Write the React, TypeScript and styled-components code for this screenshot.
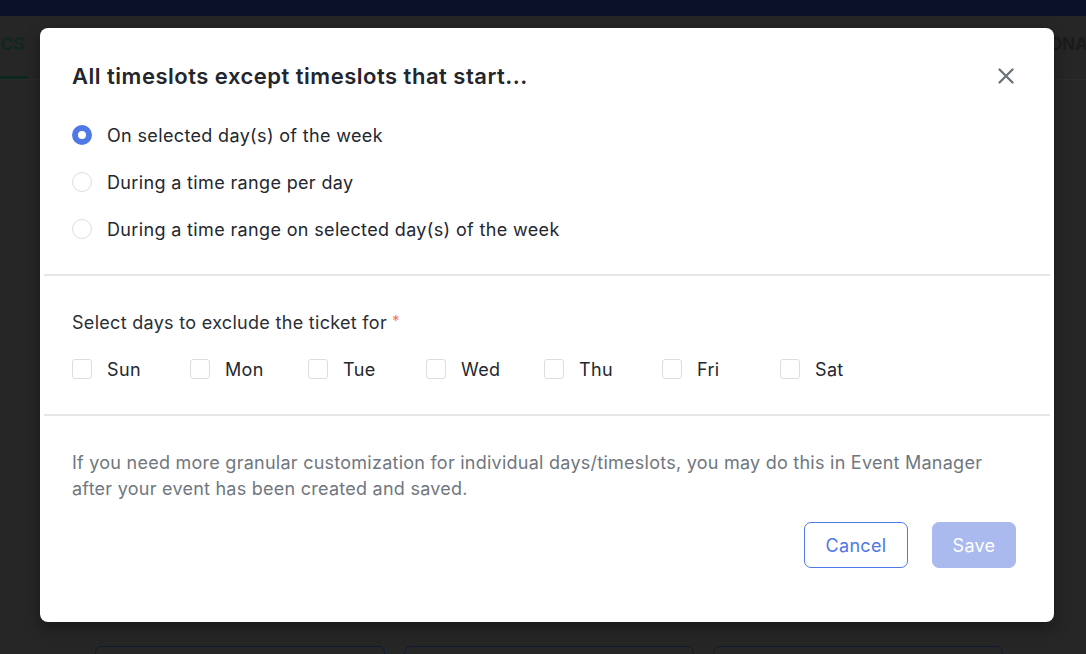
import React, { useState } from "react";
import styled, { createGlobalStyle } from "styled-components";

const GlobalStyle = createGlobalStyle`
  html, body {
    margin: 0;
    padding: 0;
    background: #262626;
    font-family: Inter, "Open Sans", Arial, sans-serif;
    overflow: hidden;
  }
`;

const Page = styled.div`
  width: 1086px;
  height: 654px;
  position: relative;
  overflow: hidden;
  background: #262626;
`;

const TopBar = styled.div`
  height: 16px;
  background: #0b1227;
`;

const Tabs = styled.div`
  height: 63px;
  display: flex;
  justify-content: space-between;
  align-items: center;
  border-bottom: 1px solid #2b2b2b;
`;

const Tab = styled.div<{ active?: boolean }>`
  height: 100%;
  display: flex;
  align-items: center;
  font-size: 17px;
  font-weight: 700;
  color: ${(p) => (p.active ? "#12261e" : "#1b1b1b")};
  border-bottom: 3px solid ${(p) => (p.active ? "#0e2620" : "transparent")};
  box-sizing: border-box;
  padding: 0 4px 4px;
  margin-left: ${(p) => (p.active ? "-8px" : "0")};
  margin-right: ${(p) => (p.active ? "0" : "-6px")};
`;

const Cards = styled.div`
  display: flex;
  gap: 19px;
  padding: 566px 0 0 95px;
`;

const GhostCard = styled.div`
  width: 288px;
  height: 40px;
  border: 1px solid #111a33;
  border-radius: 6px;
`;

const Overlay = styled.div`
  position: absolute;
  top: 16px;
  left: 0;
  right: 0;
  bottom: 0;
  padding: 12px 0 0 40px;
`;

const Modal = styled.div`
  width: 1014px;
  height: 594px;
  background: #fff;
  border-radius: 8px;
  box-shadow: 0 6px 16px rgba(0, 0, 0, 0.35);
  box-sizing: border-box;
  padding-top: 28px;
  color: #23272f;
`;

const Header = styled.div`
  display: flex;
  justify-content: space-between;
  align-items: center;
  padding: 0 36px 0 32px;
  height: 40px;
`;

const Title = styled.h2`
  margin: 0;
  font-size: 22px;
  font-weight: 600;
  letter-spacing: 0.5px;
  color: #23262d;
`;

const CloseButton = styled.button`
  border: none;
  background: none;
  padding: 0;
  width: 24px;
  height: 24px;
  display: flex;
  align-items: center;
  justify-content: center;
  cursor: pointer;
`;

const Section = styled.div<{ pad: string }>`
  padding: ${(p) => p.pad};
`;

const RadioList = styled.div`
  display: flex;
  flex-direction: column;
  gap: 23px;
`;

const OptionRow = styled.label`
  display: flex;
  align-items: center;
  gap: 15px;
  font-size: 18px;
  letter-spacing: 0.35px;
  color: #23272f;
  height: 24px;
  cursor: pointer;
`;

const RadioDot = styled.span<{ checked?: boolean }>`
  width: 20px;
  height: 20px;
  border-radius: 50%;
  box-sizing: border-box;
  flex-shrink: 0;
  border: ${(p) => (p.checked ? "6px solid #4f7ae6" : "1.5px solid #dcdde0")};
  background: #fff;
`;

const Divider = styled.hr`
  margin: 0 4px;
  border: none;
  height: 2px;
  background: #e7e7e9;
`;

const FieldLabel = styled.div`
  font-size: 18px;
  letter-spacing: 0.3px;
  color: #2a2e36;
  height: 24px;
  display: flex;
  align-items: center;
`;

const Required = styled.span`
  color: #f07a5b;
  margin-left: 5px;
  font-size: 15px;
  align-self: flex-start;
  margin-top: 1px;
`;

const DayRow = styled.div`
  display: flex;
  margin-top: 23px;
`;

const DayOption = styled.label`
  width: 118px;
  display: flex;
  align-items: center;
  gap: 15px;
  font-size: 18px;
  letter-spacing: 0.35px;
  color: #23272f;
  height: 24px;
  cursor: pointer;
`;

const Box = styled.span`
  width: 20px;
  height: 20px;
  box-sizing: border-box;
  border: 1.5px solid #dcdde0;
  border-radius: 3px;
  flex-shrink: 0;
`;

const Note = styled.p`
  margin: 0;
  font-size: 18px;
  letter-spacing: 0.25px;
  line-height: 26px;
  color: #707780;
`;

const Actions = styled.div`
  display: flex;
  justify-content: flex-end;
  gap: 24px;
  margin-top: 20px;
`;

const Button = styled.button<{ primary?: boolean }>`
  height: 46px;
  width: ${(p) => (p.primary ? "84px" : "104px")};
  box-sizing: border-box;
  border-radius: 7px;
  font-family: inherit;
  font-size: 18px;
  letter-spacing: 0.3px;
  padding: 0;
  border: 1px solid ${(p) => (p.primary ? "#aabaee" : "#5079ea")};
  background: ${(p) => (p.primary ? "#aabaee" : "#fff")};
  color: ${(p) => (p.primary ? "#fff" : "#4e78e6")};
  cursor: pointer;
`;

const options = [
  "On selected day(s) of the week",
  "During a time range per day",
  "During a time range on selected day(s) of the week",
];

const days = ["Sun", "Mon", "Tue", "Wed", "Thu", "Fri", "Sat"];

export default function App() {
  const [selected] = useState(0);

  return (
    <>
      <GlobalStyle />
      <Page>
        <TopBar />
        <Tabs>
          <Tab active>ICS</Tab>
          <Tab>ONA</Tab>
        </Tabs>
        <Cards>
          <GhostCard />
          <GhostCard />
          <GhostCard />
        </Cards>
        <Overlay>
          <Modal>
            <Header>
              <Title>All timeslots except timeslots that start...</Title>
              <CloseButton aria-label="Close">
                <svg width="18" height="18" viewBox="0 0 18 18">
                  <path
                    d="M2.5 2.5 L15.5 15.5 M15.5 2.5 L2.5 15.5"
                    stroke="#6d737c"
                    strokeWidth="2.4"
                    strokeLinecap="round"
                  />
                </svg>
              </CloseButton>
            </Header>
            <Section pad="27px 32px 33px">
              <RadioList>
                {options.map((o, i) => (
                  <OptionRow key={o}>
                    <RadioDot checked={i === selected} />
                    {o}
                  </OptionRow>
                ))}
              </RadioList>
            </Section>
            <Divider />
            <Section pad="34px 32px 33px">
              <FieldLabel>
                Select days to exclude the ticket for
                <Required>*</Required>
              </FieldLabel>
              <DayRow>
                {days.map((d) => (
                  <DayOption key={d}>
                    <Box />
                    {d}
                  </DayOption>
                ))}
              </DayRow>
            </Section>
            <Divider />
            <Section pad="34px 38px 0 32px">
              <Note>
                If you need more granular customization for individual days/timeslots, you may do
                this in Event Manager after your event has been created and saved.
              </Note>
              <Actions>
                <Button>Cancel</Button>
                <Button primary>Save</Button>
              </Actions>
            </Section>
          </Modal>
        </Overlay>
      </Page>
    </>
  );
}
